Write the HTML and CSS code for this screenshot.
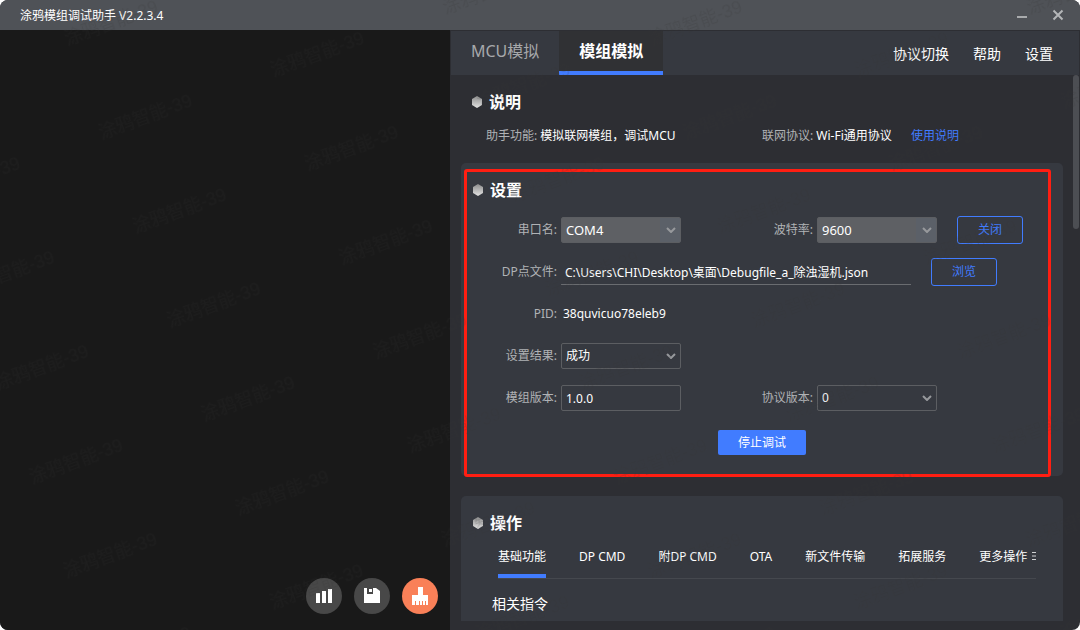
FILE: index.html
```html
<!DOCTYPE html>
<html lang="zh-CN">
<head>
<meta charset="utf-8">
<title>涂鸦模组调试助手</title>
<link rel="stylesheet" href="styles.css">
</head>
<body>
<div class="app">
  <header class="titlebar">
    <h1 class="app-name">涂鸦模组调试助手 V2.2.3.4</h1>
    <div class="window-controls">
      <button class="window-btn" type="button" aria-label="最小化"><svg width="12" height="12" viewBox="0 0 12 12"><path d="M1 8h10" stroke="#a9abad" stroke-width="2"/></svg></button>
      <button class="window-btn" type="button" aria-label="关闭窗口"><svg width="12" height="12" viewBox="0 0 12 12"><path d="M1.5 1.5l9 9M10.5 1.5l-9 9" stroke="#b4b6b8" stroke-width="2"/></svg></button>
    </div>
  </header>
  <div class="workspace">
    <section class="log" aria-label="日志">
      <div class="log-tools">
        <button class="tool" type="button" aria-label="统计"><svg width="18" height="18" viewBox="0 0 18 18" fill="#fff"><path d="M1 6h4v10H1zM7 4h4v12H7zM13 2h4v14h-4z"/></svg></button>
        <button class="tool" type="button" aria-label="保存"><svg width="18" height="18" viewBox="0 0 18 18"><path d="M1 1h12l4 3v12H1z" fill="#fff"/><path d="M4 1h6v6H4z" fill="#484848"/><path d="M6 2h3v3H6z" fill="#fff"/></svg></button>
        <button class="tool tool-clear" type="button" aria-label="清空"><svg width="18" height="20" viewBox="0 0 18 20"><path d="M7 1h5v8h5v10h-2v-4h-1v4h-2v-4h-1v4H9v-4H8v4H5v-4H4v4H1V9h6z" fill="#fff"/></svg></button>
      </div>
    </section>
    <main class="side">
      <nav class="topnav">
        <button class="mode" type="button">MCU模拟</button>
        <button class="mode mode-active" type="button">模组模拟</button>
        <div class="menu">
          <button class="menu-item" type="button">协议切换</button>
          <button class="menu-item" type="button">帮助</button>
          <button class="menu-item" type="button">设置</button>
        </div>
      </nav>
      <div class="scroller">
        <div class="panels">
          <section class="intro">
            <h2 class="heading"><svg class="gem" width="12" height="12" viewBox="0 0 12 12"><path d="M6 0l5 3v6l-5 3-5-3V3z" fill="url(#gem)"/></svg>说明</h2>
            <div class="facts">
              <p class="fact"><span class="muted">助手功能:</span> 模拟联网模组，调试MCU</p>
              <p class="fact"><span class="muted">联网协议:</span> Wi-Fi通用协议 <a class="doc-link" href="#">使用说明</a></p>
            </div>
          </section>
          <section class="card settings">
            <h2 class="heading"><svg class="gem" width="12" height="12" viewBox="0 0 12 12"><path d="M6 0l5 3v6l-5 3-5-3V3z" fill="url(#gem)"/></svg>设置</h2>
            <form class="form">
              <div class="row">
                <label class="label" for="port">串口名:</label>
                <span class="picker"><select class="field field-off" id="port"><option>COM4</option></select><svg class="chevron" width="10" height="6" viewBox="0 0 10 6"><path d="M1 1l4 4 4-4"/></svg></span>
                <label class="label label-second" for="baud">波特率:</label>
                <span class="picker"><select class="field field-off" id="baud"><option>9600</option></select><svg class="chevron" width="10" height="6" viewBox="0 0 10 6"><path d="M1 1l4 4 4-4"/></svg></span>
                <button class="btn" type="button">关闭</button>
              </div>
              <div class="row">
                <label class="label" for="file">DP点文件:</label>
                <input class="path" id="file" type="text" value="C:\Users\CHI\Desktop\桌面\Debugfile_a_除浊湿机.json">
                <button class="btn btn-browse" type="button">浏览</button>
              </div>
              <div class="row">
                <span class="label">PID:</span>
                <output class="pid">38quvicuo78eleb9</output>
              </div>
              <div class="row">
                <label class="label" for="result">设置结果:</label>
                <span class="picker"><select class="field" id="result"><option>成功</option></select><svg class="chevron" width="10" height="6" viewBox="0 0 10 6"><path d="M1 1l4 4 4-4"/></svg></span>
              </div>
              <div class="row">
                <label class="label" for="version">模组版本:</label>
                <span class="picker"><input class="field" id="version" type="text" value="1.0.0"></span>
                <label class="label label-second" for="protocol">协议版本:</label>
                <span class="picker"><select class="field" id="protocol"><option>0</option></select><svg class="chevron" width="10" height="6" viewBox="0 0 10 6"><path d="M1 1l4 4 4-4"/></svg></span>
              </div>
              <button class="btn-primary" type="button">停止调试</button>
            </form>
            <div class="highlight"></div>
          </section>
          <section class="card actions">
            <h2 class="heading"><svg class="gem" width="12" height="12" viewBox="0 0 12 12"><path d="M6 0l5 3v6l-5 3-5-3V3z" fill="url(#gem)"/></svg>操作</h2>
            <div class="tabs">
              <button class="tab tab-active" type="button">基础功能</button>
              <button class="tab" type="button">DP CMD</button>
              <button class="tab" type="button">附DP CMD</button>
              <button class="tab" type="button">OTA</button>
              <button class="tab" type="button">新文件传输</button>
              <button class="tab" type="button">拓展服务</button>
              <button class="tab" type="button">更多操作<svg class="more" width="10" height="10" viewBox="0 0 10 10"><path d="M0 1.5h10M0 5h10M0 8.5h10" stroke="#d0d1d3"/></svg></button>
            </div>
            <h3 class="subheading">相关指令</h3>
          </section>
        </div>
        <div class="scrollbar"></div>
      </div>
    </main>
  </div>
  <svg class="watermark" width="100%" height="100%" aria-hidden="true">
    <defs>
      <linearGradient id="gem" x1="0" y1="0" x2="0" y2="1"><stop offset="0" stop-color="#8c8c8c"/><stop offset="1" stop-color="#e4e4e4"/></linearGradient>
      <pattern id="mark" width="183" height="100" patternUnits="userSpaceOnUse" patternTransform="translate(74 64) rotate(-20)"><text class="mark-text" x="0" y="80">涂鸦智能-39</text></pattern>
    </defs>
    <rect width="100%" height="100%" fill="url(#mark)"/>
  </svg>
</div>
</body>
</html>
```
FILE: styles.css
```css
* { box-sizing: border-box; }

body {
  margin: 0;
  background: #fff;
  color: #fff;
  font: 12px/20px "Noto Sans", "Noto Sans CJK SC", sans-serif;
}

h1, h2, h3, p { margin: 0; font-weight: 400; }

button, input, select {
  margin: 0;
  padding: 0;
  border: 0;
  background: none;
  color: inherit;
  font: inherit;
}

.app {
  position: relative;
  display: flex;
  flex-direction: column;
  height: 100vh;
  overflow: hidden;
  border-radius: 8px;
  background: #2d2e33;
}

.titlebar {
  display: flex;
  flex: none;
  align-items: center;
  justify-content: space-between;
  height: 30px;
  padding: 0 16px 0 20px;
  background: #4f5257;
}

.app-name { padding-top: 1px; font-size: 12px; line-height: 20px; }
.window-controls { display: flex; gap: 24px; }
.window-btn { display: flex; }

.workspace {
  display: grid;
  flex: 1;
  grid-template-columns: minmax(0, 5fr) minmax(0, 7fr);
  grid-template-rows: minmax(0, 1fr);
  min-height: 0;
}

.log {
  display: flex;
  align-items: flex-end;
  justify-content: flex-end;
  padding: 0 12px 16px;
  background: #191919;
}

.log-tools { display: flex; gap: 12px; }

.tool {
  display: flex;
  align-items: center;
  justify-content: center;
  width: 36px;
  height: 36px;
  border-radius: 50%;
  background: #484848;
}

.tool-clear { background: #f98058; }

.side {
  display: flex;
  flex-direction: column;
  padding: 1px 1px 9px;
}

.topnav { display: flex; flex: none; height: 44px; background: #363940; }

.mode {
  padding: 0 20px 4px;
  color: #a6a8ab;
  font-size: 16px;
}

.mode-active {
  padding-bottom: 0;
  border-bottom: 4px solid #417cff;
  background: #303134;
  color: #fff;
  font-weight: 700;
}

.menu {
  display: flex;
  gap: 24px;
  align-items: center;
  margin-left: auto;
  padding: 2px 26px 0 0;
}

.menu-item { font-size: 14px; }

.scroller { display: flex; flex: 1; min-height: 0; overflow: hidden; }
.panels { flex: 1; min-width: 0; padding: 0 10px; }

.scrollbar {
  width: 6px;
  height: 154px;
  border-radius: 3px;
  background: #4c4e53;
}

.heading {
  display: flex;
  gap: 6px;
  align-items: center;
  font-size: 16px;
  font-weight: 700;
  line-height: 24px;
}

.intro { height: 88px; padding: 15px 11px 0 10px; }

.facts {
  display: grid;
  grid-template-columns: 276px 1fr;
  padding: 12px 0 0 15px;
}

.muted { color: #b0b2b5; }
.doc-link { margin-left: 16px; color: #417cff; text-decoration: none; }

.card { position: relative; border-radius: 5px; background: #363940; }

.settings { padding: 15px 0 21px; }
.card .heading { padding-left: 11px; }

.form { display: flex; flex-direction: column; gap: 14px; padding-top: 14px; }
.row { display: flex; gap: 4px; align-items: center; height: 28px; }
.label { width: 96px; color: #b0b2b5; text-align: right; }
.label-second { width: 128px; }

.picker { position: relative; display: flex; width: 120px; }

.field {
  width: 100%;
  height: 26px;
  padding: 0 4px;
  border: 1px solid #5c5e62;
  border-radius: 2px;
  appearance: none;
}

.field-off {
  background: linear-gradient(to left, #5b6068 20px, #5e6064 20px);
  font-size: 13px;
}

.chevron {
  position: absolute;
  top: 10px;
  right: 5px;
  fill: none;
  stroke: #97999c;
  stroke-width: 2;
  pointer-events: none;
}

.path {
  width: 350px;
  height: 26px;
  padding: 0 4px;
  border-bottom: 1px solid #6a6c70;
}

.pid { padding-left: 2px; }

.btn {
  width: 66px;
  height: 28px;
  margin-left: 16px;
  border: 1px solid #417cff;
  border-radius: 3px;
  color: #417cff;
}

.btn-primary {
  align-self: center;
  width: 88px;
  height: 25px;
  margin-top: 4px;
  border-radius: 2px;
  background: #417cff;
}

.highlight {
  position: absolute;
  inset: 6px 12px -1px 3px;
  border: 3px solid #ff1e12;
  border-radius: 3px;
  pointer-events: none;
}

.actions { height: 160px; margin-top: 20px; padding-top: 15px; }

.tabs {
  display: flex;
  gap: 33px;
  margin: 8px 27px 0 37px;
  overflow: hidden;
  border-bottom: 1px solid #45484e;
}

.tab {
  flex: none;
  height: 35px;
  padding: 0 0 4px;
  border-bottom: 4px solid transparent;
  white-space: nowrap;
}

.tab-active { border-bottom-color: #417cff; }
.more { margin-left: 5px; }
.subheading { padding: 15px 31px; font-size: 14px; line-height: 20px; }

.watermark { position: absolute; inset: 0; pointer-events: none; }

.mark-text {
  fill: #303030;
  fill-opacity: 0.18;
  font: 18px "Liberation Sans", "Noto Sans CJK SC", sans-serif;
}
```
